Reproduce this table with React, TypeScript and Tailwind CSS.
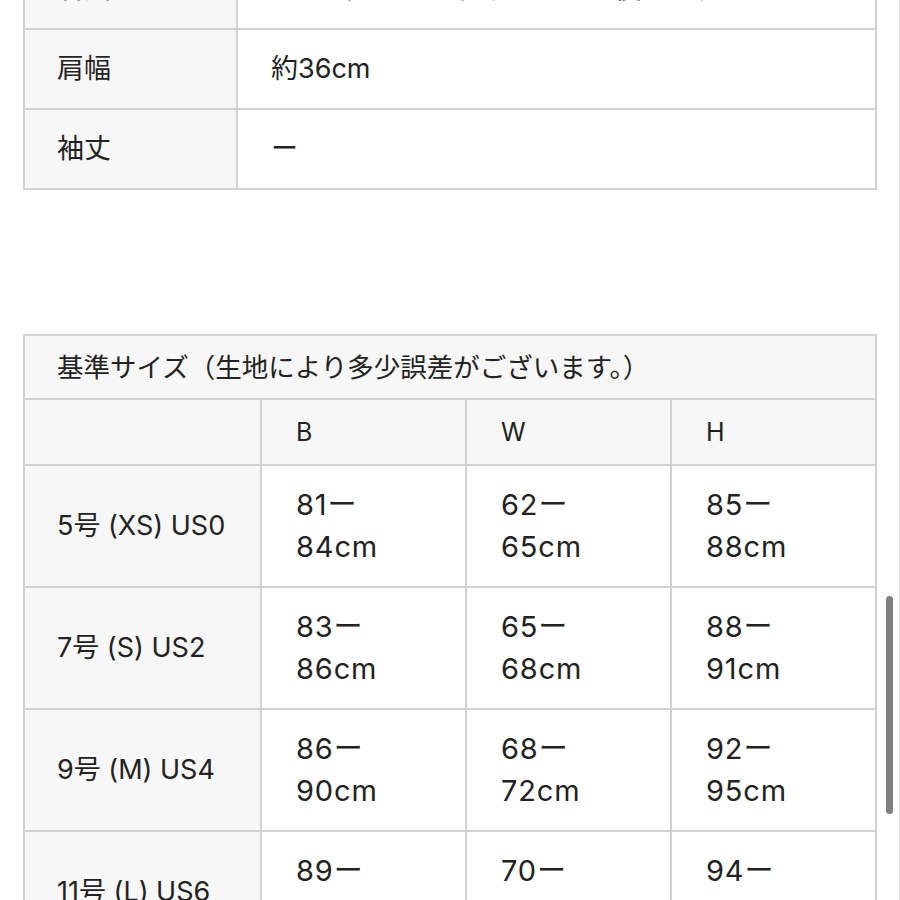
import React from "react";

const specs = [
  { label: "着丈", value: "前側（ウエスト）約84cm　後ろ側約96cm" },
  { label: "肩幅", value: "約36cm" },
  { label: "袖丈", value: "ー" },
];

const sizes = [
  { name: "5号 (XS) US0", b: ["81ー", "84cm"], w: ["62ー", "65cm"], h: ["85ー", "88cm"] },
  { name: "7号 (S) US2", b: ["83ー", "86cm"], w: ["65ー", "68cm"], h: ["88ー", "91cm"] },
  { name: "9号 (M) US4", b: ["86ー", "90cm"], w: ["68ー", "72cm"], h: ["92ー", "95cm"] },
  { name: "11号 (L) US6", b: ["89ー", "92cm"], w: ["70ー", "74cm"], h: ["94ー", "97cm"] },
];

function Range({ lines }: { lines: string[] }) {
  return (
    <div className="bg-white flex items-center pl-[34px] text-[29px] tracking-[0.03em] leading-[42px]">
      <div>
        {lines[0]}
        <br />
        {lines[1]}
      </div>
    </div>
  );
}

export default function App() {
  return (
    <div className="relative h-[900px] overflow-hidden bg-white text-[#222] font-['Inter','Noto_Sans_CJK_JP',sans-serif]">
      <div className="-mt-[52px] px-[23px]">
        {/* spec table */}
        <div className="grid grid-cols-[211px_1fr] gap-[2px] bg-[#d2d2d2] p-[2px]">
          {specs.map((s) => (
            <React.Fragment key={s.label}>
              <div className="bg-[#f7f7f7] h-[78px] flex items-center pl-[32px] text-[27px]">{s.label}</div>
              <div className="bg-white h-[78px] flex items-center pl-[33px] text-[27px]">{s.value}</div>
            </React.Fragment>
          ))}
        </div>

        {/* size table */}
        <div className="mt-[144px] grid grid-cols-[235px_203px_203px_1fr] gap-[2px] bg-[#d2d2d2] p-[2px]">
          <div className="col-span-4 bg-[#f7f7f7] h-[62px] flex items-center pl-[32px] pt-[2px] text-[26.5px]">
            基準サイズ（生地により多少誤差がございます。）
          </div>
          <div className="bg-[#f7f7f7] h-[64px]" />
          {["B", "W", "H"].map((h) => (
            <div key={h} className="bg-[#f7f7f7] h-[64px] flex items-center pl-[34px] pt-[2px] text-[25px]">
              {h}
            </div>
          ))}
          {sizes.map((s) => (
            <React.Fragment key={s.name}>
              <div className="bg-[#f7f7f7] h-[120px] flex items-center pl-[32px] text-[27px]">{s.name}</div>
              <Range lines={s.b} />
              <Range lines={s.w} />
              <Range lines={s.h} />
            </React.Fragment>
          ))}
        </div>
      </div>

      {/* scroll indicator */}
      <div className="absolute right-[7px] top-[596px] h-[218px] w-[7px] rounded-full bg-[#7f7f7f]" />
      <div className="absolute right-0 top-0 h-full w-px bg-[#dcdcdc]" />
    </div>
  );
}
